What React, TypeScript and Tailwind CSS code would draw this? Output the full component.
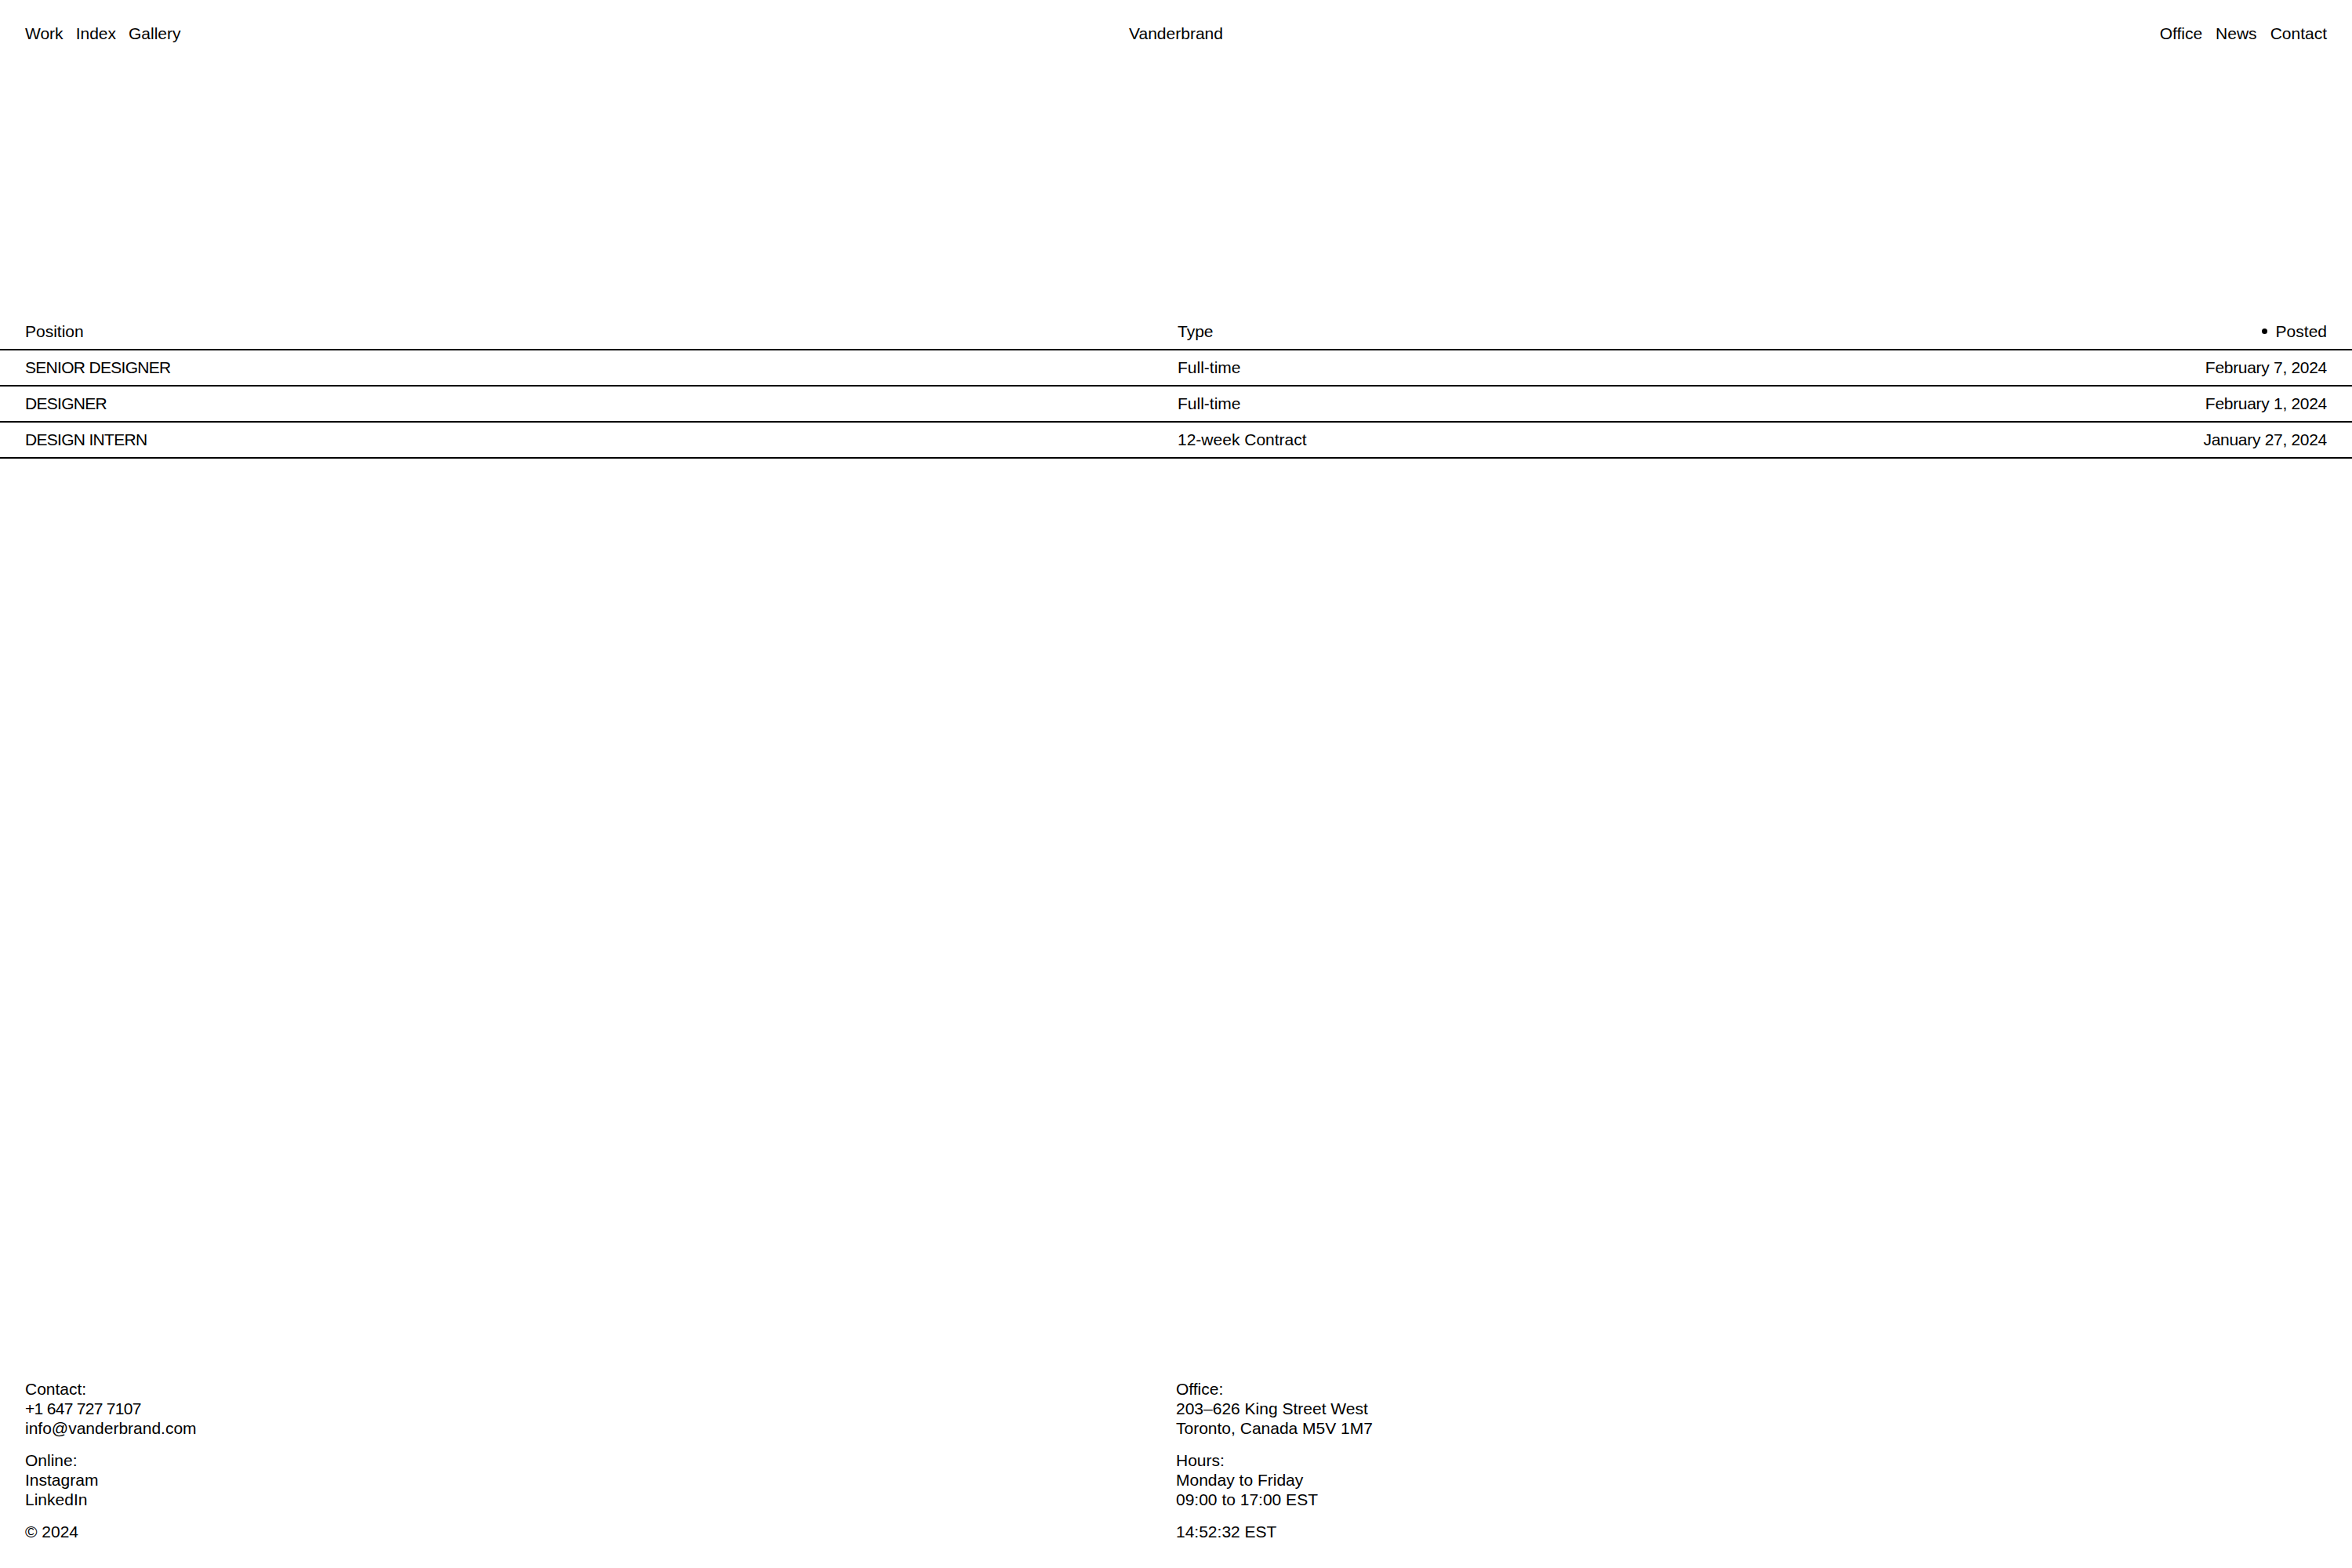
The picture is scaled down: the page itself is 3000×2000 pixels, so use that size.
const positions = [
  { title: "SENIOR DESIGNER", type: "Full-time", posted: "February 7, 2024" },
  { title: "DESIGNER", type: "Full-time", posted: "February 1, 2024" },
  { title: "DESIGN INTERN", type: "12-week Contract", posted: "January 27, 2024" },
];

export default function App() {
  return (
    <div className="min-h-screen flex flex-col bg-white text-black font-['Liberation_Sans',Arial,sans-serif] text-[21px] leading-[25px]">
      <header className="grid grid-cols-3 px-8 pt-[30px]">
        <nav className="flex gap-4">
          <a href="#">Work</a>
          <a href="#">Index</a>
          <a href="#">Gallery</a>
        </nav>
        <div className="text-center">Vanderbrand</div>
        <nav className="flex gap-[17px] justify-end">
          <a href="#">Office</a>
          <a href="#">News</a>
          <a href="#">Contact</a>
        </nav>
      </header>

      <main className="mt-[346px]">
        <div className="grid grid-cols-2 px-8 pt-[9px] pb-[10px] border-b-2 border-black">
          <div>Position</div>
          <div className="flex justify-between">
            <div className="pl-[2px]">Type</div>
            <div className="flex items-center">
              <span className="w-[7px] h-[7px] rounded-full bg-black mr-[11px]" />
              Posted
            </div>
          </div>
        </div>
        {positions.map((p) => (
          <div
            key={p.title}
            className="grid grid-cols-2 px-8 pt-[9px] pb-[10px] border-b-2 border-black"
          >
            <div className="tracking-[-0.7px]">{p.title}</div>
            <div className="flex justify-between">
              <div className="pl-[2px]">{p.type}</div>
              <div className="tracking-[-0.3px]">{p.posted}</div>
            </div>
          </div>
        ))}
      </main>

      <footer className="mt-auto grid grid-cols-2 px-8 pb-[34px]">
        <div className="flex flex-col gap-4">
          <div>
            <p>Contact:</p>
            <p className="tracking-[-0.7px]">+1 647 727 7107</p>
            <p>info@vanderbrand.com</p>
          </div>
          <div>
            <p>Online:</p>
            <p>Instagram</p>
            <p>LinkedIn</p>
          </div>
          <p>© 2024</p>
        </div>
        <div className="flex flex-col gap-4">
          <div>
            <p>Office:</p>
            <p>203–626 King Street West</p>
            <p>Toronto, Canada M5V 1M7</p>
          </div>
          <div>
            <p>Hours:</p>
            <p>Monday to Friday</p>
            <p>09:00 to 17:00 EST</p>
          </div>
          <p>14:52:32 EST</p>
        </div>
      </footer>
    </div>
  );
}
